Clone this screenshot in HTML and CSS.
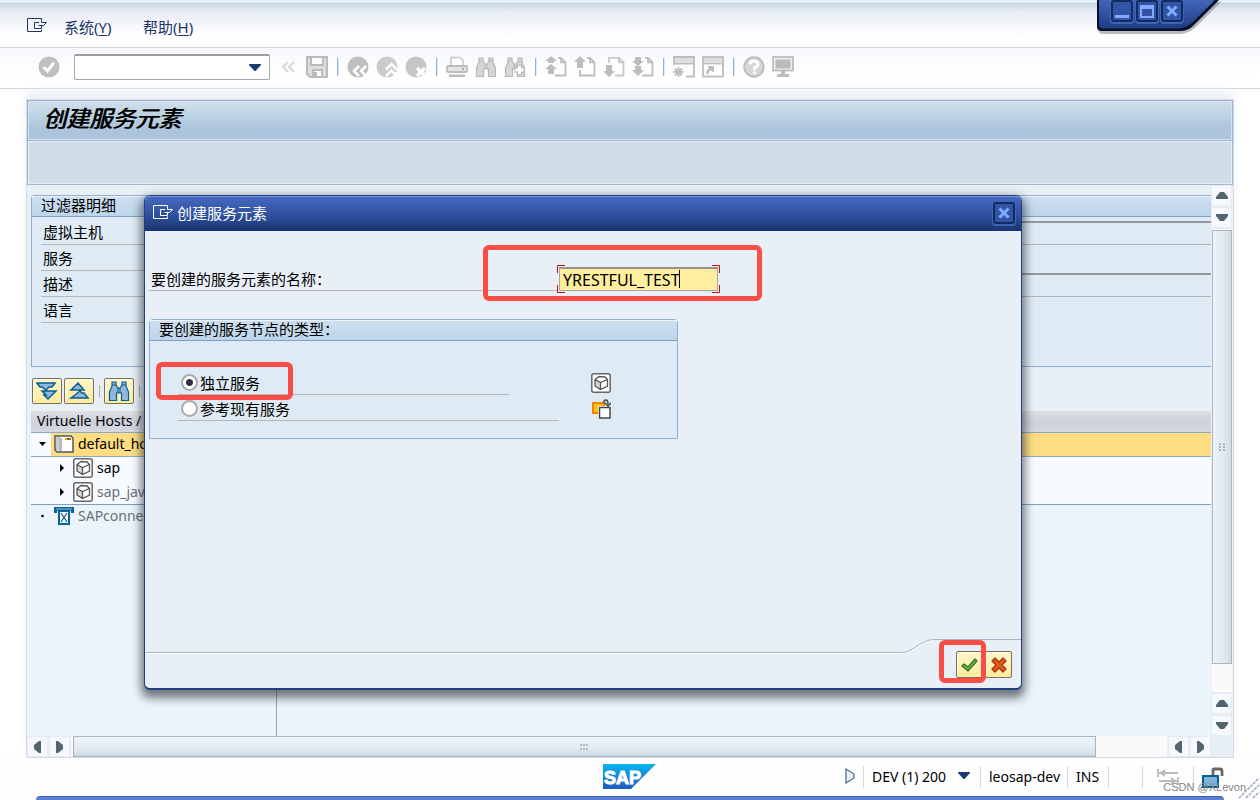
FILE: index.html
```html
<!DOCTYPE html>
<html lang="zh-CN">
<head>
<meta charset="utf-8">
<title>创建服务元素</title>
<link rel="stylesheet" href="styles.css">
</head>
<body>
<svg class="defs" aria-hidden="true">
  <defs>
    <linearGradient id="sapblue" x1="0" y1="0" x2="0" y2="1"><stop offset="0" stop-color="#0cb4ee"/><stop offset="1" stop-color="#1f5cc0"/></linearGradient>
    <linearGradient id="winblue" x1="0" y1="0" x2="0" y2="1"><stop offset="0" stop-color="#4265b8"/><stop offset="1" stop-color="#1f3c80"/></linearGradient>
    <symbol id="exit" viewBox="0 0 20 15"><path d="M14.500 3V.5H.5V13.500H14.500V11.500M14.500 2.500V4.500H19.500L16.500 7.500H11.500M12 4.500H7.500V10.500H14.500V8" fill="none" stroke="currentColor" stroke-width="1"/></symbol>
    <symbol id="cube" viewBox="0 0 20 20"><rect x=".8" y=".8" width="18.400" height="18.400" rx="2" fill="#fff" stroke="#666" stroke-width="1.500"/><path d="M4 6.500L9.500 9.500V16.500L4 13Z" fill="#d4d4d4"/><path d="M4 6.500L8 3.500L14 4L16.500 6.500V13L9.500 16.500L4 13ZM4 6.500L9.500 9.500L16.500 6.500M9.500 9.500V16.500" fill="none" stroke="#555" stroke-width="1.300"/></symbol>
    <symbol id="binoc" viewBox="0 0 22 22"><path d="M4 2H8V5L10 8H12L14 5V2H18V6L20.500 12V20.500H13.500V13H8.500V20.500H1.500V12L4 6Z" stroke-width="1.200"/><path d="M4 5H8M14 5H18M10 8V13M12 8V13" fill="none"/></symbol>
    <symbol id="page" viewBox="0 0 22 22"><path d="M13 1.800H16L20.500 6.300V19.500H10M16 1.800V6.300H20.500" fill="none" stroke="#bdbdbd" stroke-width="1.800"/></symbol>
  </defs>
</svg>
<div class="window">
  <nav class="menubar">
    <button class="plain menu-icon" aria-label="菜单"><svg width="20" height="15"><use href="#exit"/></svg></button>
    <a class="menu" href="#">系统(<u>Y</u>)</a>
    <a class="menu" href="#">帮助(<u>H</u>)</a>
  </nav>
  <div class="winctl">
    <svg class="winctl-shape" width="126" height="36" viewBox="0 0 126 36"><path d="M0 0H124L99 25Q92 31 84 32H6Q1 32 1 27V0Z" fill="#777" opacity=".5" transform="translate(0 2)"/><path d="M0 0H122L98 24Q92 31 84 31H5Q0 31 0 27Z" fill="#050f2c"/><path d="M2 0H118L97 21Q90 28 82 28.500H6Q2 28.500 2 25Z" fill="url(#winblue)"/></svg>
    <button class="wbtn" aria-label="最小化"><svg width="16" height="16"><rect x="1" y="12" width="14" height="3" fill="#82aaff"/></svg></button>
    <button class="wbtn" aria-label="最大化"><svg width="16" height="16"><path d="M1 2H15V15H1ZM3 6V13H13V6Z" fill="#82aaff" fill-rule="evenodd"/></svg></button>
    <button class="wbtn" aria-label="关闭"><svg width="16" height="16"><path d="M3.500 3.500L12.500 12.500M12.500 3.500L3.500 12.500" stroke="#82aaff" stroke-width="3"/></svg></button>
  </div>
  <div class="toolbar">
    <button class="plain" aria-label="确认"><svg width="22" height="22"><circle cx="11" cy="11" r="10.500" fill="#bfbfbf"/><path d="M5.500 11L9.500 15L16 6.500" fill="none" stroke="#fff" stroke-width="3"/></svg></button>
    <div class="combo"><input aria-label="命令"><button class="plain" aria-label="展开"><svg width="12" height="7"><path d="M0 0H12V1L6.500 7H5.500L0 1Z" fill="#1f3a70"/></svg></button></div>
    <button class="plain chev" aria-label="收起"><svg width="14" height="12"><path d="M7 1L2 6L7 11M13 1L8 6L13 11" fill="none" stroke="#d8d8d8" stroke-width="2"/></svg></button>
    <button class="plain" aria-label="保存"><svg width="22" height="22"><path d="M1 1H21V21H4L1 18Z" fill="#dedede" stroke="#bbb" stroke-width="2"/><path d="M5 1H17V9H5ZM7 14H16V21H7Z" fill="#fff" stroke="#bbb" stroke-width="2"/><rect x="8" y="16" width="3" height="5" fill="#bbb"/></svg></button>
    <i class="sep"></i>
    <div class="tools">
      <button class="plain" aria-label="返回"><svg width="22" height="22"><circle cx="11" cy="11" r="10.500" fill="#bfbfbf"/><path d="M12 10L7 15L12 20M19 10L14 15L19 20" fill="none" stroke="#fff" stroke-width="2.500"/></svg></button>
      <button class="plain" aria-label="退出"><svg width="22" height="22"><circle cx="11" cy="11" r="10.500" fill="#cbcbcb"/><path d="M10 13.500L15.500 8L21 13.500M10 20L15.500 14.500L21 20" fill="none" stroke="#fff" stroke-width="2.500"/></svg></button>
      <button class="plain" aria-label="取消"><svg width="22" height="22"><circle cx="11" cy="11" r="10.500" fill="#c6c6c6"/><path d="M12 12L20 20M20 12L12 20" stroke="#fff" stroke-width="3.200"/></svg></button>
    </div>
    <i class="sep"></i>
    <div class="tools">
      <button class="plain" aria-label="打印"><svg width="22" height="22"><path d="M5 9V1.500H14L17 4.500V9" fill="#fff" stroke="#c6c6c6" stroke-width="1.500"/><rect x="1" y="10" width="20" height="6" rx="1" fill="#e4e4e4" stroke="#bbb" stroke-width="1.800"/><rect x="3" y="18.500" width="16" height="2.500" fill="#bbb"/><rect x="16" y="12" width="2" height="2" fill="#aaa"/></svg></button>
      <button class="plain gray" aria-label="查找"><svg width="22" height="22"><use href="#binoc"/></svg></button>
      <button class="plain gray" aria-label="继续查找"><svg width="22" height="22"><use href="#binoc"/><path d="M15.500 9V19M10.500 14H20.500" stroke="#bbb" stroke-width="5.500"/><path d="M15.500 10V18M11.500 14H19.500" stroke="#fff" stroke-width="3"/></svg></button>
    </div>
    <i class="sep"></i>
    <div class="tools">
      <button class="plain" aria-label="首页"><svg width="22" height="22"><use href="#page"/><path d="M6 0L12 5H9V7H3V5H0ZM6 8L12 13H9V18H3V13H0Z" fill="#bdbdbd"/></svg></button>
      <button class="plain" aria-label="上一页"><svg width="22" height="22"><use href="#page"/><path d="M6 14V19.500H11" fill="none" stroke="#bdbdbd" stroke-width="1.800"/><path d="M6 0L12 6H9V12H3V6H0Z" fill="#bdbdbd"/></svg></button>
      <button class="plain" aria-label="下一页"><svg width="22" height="22"><path d="M6 7V1.800H16L20.500 6.300V19.500H12M16 1.800V6.300H20.500" fill="none" stroke="#c8c8c8" stroke-width="1.800"/><path d="M6 21L12 15H9V9H3V15H0Z" fill="#bdbdbd"/></svg></button>
      <button class="plain" aria-label="末页"><svg width="22" height="22"><use href="#page"/><path d="M3 1H9V5H12L6 10L0 5H3ZM3 10H9V14H12L6 20L0 14H3Z" fill="#bdbdbd"/></svg></button>
    </div>
    <i class="sep"></i>
    <div class="tools">
      <button class="plain" aria-label="新建会话"><svg width="22" height="22"><path d="M1 9V1H21V20.500H13" fill="none" stroke="#bdbdbd" stroke-width="1.800"/><path d="M2 2H20V6H2Z" fill="#dedede"/><path d="M1 7.500H21M5.500 11V21M.5 16H10.500M2 12.500L9 19.500M9 12.500L2 19.500" stroke="#bdbdbd" stroke-width="1.800"/></svg></button>
      <button class="plain" aria-label="快捷方式"><svg width="22" height="22"><rect x="1" y="1" width="20" height="19.500" fill="#fff" stroke="#bdbdbd" stroke-width="1.800"/><path d="M2 2H20V6H2Z" fill="#dedede"/><path d="M1 7.500H21" stroke="#bdbdbd" stroke-width="1.800"/><path d="M5.500 18Q5 14 9 13" fill="none" stroke="#bbb" stroke-width="2.500"/><path d="M6 10.500H11.500V16Z" fill="#bbb" stroke="#bbb"/></svg></button>
    </div>
    <i class="sep"></i>
    <div class="tools">
      <button class="plain" aria-label="帮助"><svg width="22" height="22"><circle cx="11" cy="11" r="9.800" fill="#d6d6d6" stroke="#bdbdbd" stroke-width="1.800"/><path d="M7 8.500Q7 5 11 5Q15 5 15 8.500Q15 10.500 11.500 11.500V14M11.500 15.500V18" fill="none" stroke="#fff" stroke-width="2.800"/></svg></button>
      <button class="plain" aria-label="布局"><svg width="22" height="22"><rect x="1" y="1" width="20" height="13.500" fill="#eee" stroke="#bdbdbd" stroke-width="1.800"/><rect x="3.500" y="3.500" width="15" height="9" fill="#bbb"/><path d="M9 15H13V18H17V21H5V18H9Z" fill="#bdbdbd"/></svg></button>
    </div>
  </div>

  <main class="frame">
    <h1 class="title">创建服务元素</h1>
    <div class="appbar"></div>
    <div class="work">
      <div class="content">
        <section class="filter">
          <h2 class="group-title">过滤器明细</h2>
          <div class="frows">
            <div class="frow"><label for="f1">虚拟主机</label><input id="f1" readonly></div>
            <div class="frow"><span>服务</span></div>
            <div class="frow"><label for="f3">描述</label><input id="f3" readonly></div>
            <div class="frow"><span>语言</span></div>
          </div>
        </section>
        <div class="treebar">
          <button class="ybtn" aria-label="全部展开"><svg width="22" height="20"><path d="M1 2H19L16 6H13L10 9L6 6H4ZM6 10H20L12 18L8 14H10Z" fill="#8fb6dc" stroke="#045f92" stroke-width="1.500"/></svg></button>
          <button class="ybtn" aria-label="全部折叠"><svg width="22" height="20"><path d="M3 9L10 2L16 9ZM3 17H20L16 12H14L12 10L7 14Z" fill="#8fb6dc" stroke="#045f92" stroke-width="1.500"/></svg></button>
          <i class="bar"></i>
          <button class="ybtn find" aria-label="查找"><svg width="22" height="22"><use href="#binoc"/></svg></button>
          <i class="bar"></i>
        </div>
        <table class="tree">
          <thead><tr><th class="c1">Virtuelle Hosts /</th><th></th></tr></thead>
          <tbody>
            <tr class="sel"><td class="c1"><div class="node"><svg class="tw" width="9" height="5"><path d="M1 0H8L4.500 4Z"/></svg><div class="hot"><svg width="20" height="18"><path d="M1 1H17L19 3V17H3L1 15Z" fill="#fff" stroke="#555" stroke-width="1.500"/><path d="M5 1V16M7 3V16" stroke="#777"/><rect x="2" y="2" width="3" height="13" fill="#ccc"/><rect x="11" y="3" width="2" height="2" fill="#f7b500"/><rect x="13" y="3" width="2" height="2" fill="#e22"/><rect x="15" y="3" width="2" height="2" fill="#2b2"/></svg><span>default_host</span></div></div></td><td></td></tr>
            <tr><td class="c1"><div class="node sub"><svg class="tw" width="5" height="8"><path d="M0 0L4 4L0 8Z"/></svg><svg width="20" height="20"><use href="#cube"/></svg><span>sap</span></div></td><td></td></tr>
            <tr class="last"><td class="c1"><div class="node sub dim"><svg class="tw" width="5" height="8"><path d="M0 0L4 4L0 8Z"/></svg><svg width="20" height="20"><use href="#cube"/></svg><span>sap_java</span></div></td><td></td></tr>
            <tr class="tail"><td class="c1"><div class="node dim"><svg class="tw" width="9" height="4"><circle cx="4.500" cy="2" r="1.300"/></svg><div class="hot"><svg width="20" height="20"><path d="M0 1H20V7H17V5H3V7H0Z" fill="#0a6296"/><path d="M2 3H18" stroke="#8fc0e0"/><path d="M5 5H15V18H5Z" fill="#fff" stroke="#0a6296" stroke-width="2"/><path d="M7 7L13 16M13 7L7 16" stroke="#0a6296" stroke-width="1.300"/></svg><span>SAPconnect</span></div></div></td><td></td></tr>
          </tbody>
        </table>
        <div class="treefill"></div>
      </div>
      <div class="vscroll">
        <button aria-label="上"><svg width="12" height="7"><path d="M4 0H8L12 5V7H0V5Z"/></svg></button>
        <button aria-label="下"><svg width="12" height="7"><path d="M4 7H8L12 2V0H0V2Z"/></svg></button>
        <div class="vtrack"><div class="vthumb"><i class="grip"></i></div></div>
        <button aria-label="上"><svg width="12" height="7"><path d="M4 0H8L12 5V7H0V5Z"/></svg></button>
        <button aria-label="下"><svg width="12" height="7"><path d="M4 7H8L12 2V0H0V2Z"/></svg></button>
      </div>
    </div>
    <div class="hscroll">
      <button aria-label="左"><svg width="7" height="12"><path d="M0 4V8L5 12H7V0H5Z"/></svg></button>
      <button aria-label="右"><svg width="7" height="12"><path d="M7 4V8L2 12H0V0H2Z"/></svg></button>
      <div class="htrack"><div class="hthumb"><i class="grip wide"></i></div></div>
      <button aria-label="左"><svg width="7" height="12"><path d="M0 4V8L5 12H7V0H5Z"/></svg></button>
      <button aria-label="右"><svg width="7" height="12"><path d="M7 4V8L2 12H0V0H2Z"/></svg></button>
    </div>
  </main>

  <footer class="status">
    <div class="logo-slot"><svg width="53" height="26" viewBox="0 0 53 26"><path d="M0 0H53L28 25H0Z" fill="url(#sapblue)"/><text class="logo-text" x="1" y="20">SAP</text></svg></div>
    <div class="cells">
      <button class="plain play" aria-label="展开"><svg width="10" height="16"><path d="M1 1L9 6V10L1 15Z" fill="#e8eef8" stroke="#5a6d92" stroke-width="1.300"/></svg></button>
      <div class="cell sys">DEV (1) 200<svg width="12" height="7"><path d="M0 0H12V1L6.500 7H5.500L0 1Z" fill="#1f3a70"/></svg></div>
      <div class="cell host">leosap-dev</div>
      <div class="cell ins">INS</div>
      <div class="cell gap"></div>
      <div class="cell arrows"><svg width="22" height="18"><path d="M1 1V9M2 5H21M21 9V17M2 13H20" stroke="#bbb" stroke-width="1.800"/><path d="M2 5L8 1V9ZM20 13L14 9V17Z" fill="#bbb"/></svg></div>
      <div class="cell lock"><svg width="22" height="21"><path d="M11 9V3Q11 2 12 2H18Q20 2 20 4V9" fill="none" stroke="#666" stroke-width="2.800"/><rect x="1" y="9" width="15" height="11" fill="#80b2da" stroke="#045f92" stroke-width="2"/></svg></div>
    </div>
    <svg class="resize" width="22" height="22"><path d="M1 21L21 1M8 21L21 8M15 21L21 15" stroke="#9aa8c4" stroke-width="1.500" stroke-dasharray="3 1"/></svg>
    <span class="watermark">CSDN @XLevon</span>
  </footer>
  <div class="band"></div>

  <form class="dialog" role="dialog" aria-labelledby="dt" onsubmit="return false">
    <header class="dhead"><svg width="20" height="15"><use href="#exit"/></svg><h2 id="dt">创建服务元素</h2>
      <button class="wbtn" type="button" aria-label="关闭"><svg width="16" height="16"><path d="M3.500 3.500L12.500 12.500M12.500 3.500L3.500 12.500" stroke="#82aaff" stroke-width="3"/></svg></button></header>
    <div class="dbody">
      <div class="field"><label for="nm">要创建的服务元素的名称：</label>
        <div class="focus"><input id="nm" value="YRESTFUL_TEST"><i class="caret"></i><svg class="corners" width="163" height="28"><path d="M.5 8V.5H8M155 .5H162.500V8M.5 20V27.500H8M155 27.500H162.500V20" fill="none" stroke="#d00a0a"/></svg></div>
        <i class="mark m1"></i></div>
      <fieldset class="group">
        <legend class="group-title">要创建的服务节点的类型：</legend>
        <div class="rows">
          <div class="rrow"><label class="opt short"><input type="radio" name="t" checked>独立服务</label><svg width="20" height="20"><use href="#cube"/></svg><i class="mark m2"></i></div>
          <div class="rrow"><label class="opt"><input type="radio" name="t">参考现有服务</label><svg width="20" height="20"><rect x="2" y="4" width="11" height="10" fill="#ffc20e" stroke="#f08200" stroke-width="2"/><rect x="7" y="7" width="13" height="13" fill="#fff"/><path d="M8.500 8.500H19V19H8.500ZM13 4V2Q13 1 15 1Q17 1 17 5M14 4L17 7L20 4" fill="none" stroke="#444" stroke-width="1.500"/></svg></div>
        </div>
      </fieldset>
    </div>
    <div class="dfoot">
      <div class="fline"></div>
      <svg width="30" height="14"><path d="M0 14.500Q6 14.500 12 10Q24 1.500 30 1.500" fill="none" stroke="#fff"/><path d="M0 13.500Q5 13.500 11 9Q23 .5 30 .5" fill="none" stroke="#a8b6cc"/></svg>
      <div class="fright">
        <button class="ybtn" aria-label="继续"><svg width="20" height="18"><path d="M2 10L4 8L8 11L15 3L17 5L8 15Z" fill="#7dbb1f" stroke="#36753a" stroke-width="1.300" stroke-linejoin="round"/></svg></button>
        <button class="ybtn" type="button" aria-label="取消"><svg width="16" height="16"><path d="M4 1L8 5L12 1L15 4L11 8L15 12L12 15L8 11L4 15L1 12L5 8L1 4Z" fill="#e05a14" stroke="#a83214" stroke-width="1.300" stroke-linejoin="round"/></svg></button>
        <i class="mark m3"></i>
      </div>
    </div>
  </form>
</div>
</body>
</html>
```
FILE: styles.css
```css
* { box-sizing: border-box; }
body { margin: 0; font: 14px/20px "Noto Sans", "Noto Sans CJK SC", sans-serif; color: #000; background: #fff; }
.defs { position: absolute; width: 0; height: 0; }
h1, h2 { margin: 0; font-weight: 400; }
i { font-style: normal; }
svg { display: block; flex: none; }
button { font: inherit; }
.plain { border: 0; padding: 0; background: none; color: inherit; flex: none; }
.window { position: relative; display: flex; flex-direction: column; min-height: 100vh; overflow: hidden; }

.menubar { display: flex; align-items: center; height: 48px; padding: 7px 27px 0; color: #1d3464; border-bottom: 1px solid #d3d7e4; background: linear-gradient(#eaf1f9 0 2px, #c5d5e6 3px, #e8edf5 12px, #fff 36px); }
.menu-icon { margin-right: 17px; padding-bottom: 3px; }
.menu { width: 79px; font-size: 15px; color: inherit; text-decoration: none; }
.menu u { text-underline-offset: 2px; }
.winctl { position: absolute; top: 0; right: 37px; width: 126px; height: 36px; display: flex; gap: 3px; padding-left: 14px; }
.winctl-shape { position: absolute; left: 0; top: 0; }
.wbtn { position: relative; width: 22px; height: 22px; padding: 0; display: grid; place-items: center; border: 2px solid #142a62; border-radius: 3px; background: #3154a4; box-shadow: 0 1px 0 1px #4064b0; }

.toolbar { display: flex; align-items: center; height: 41px; padding: 0 38px 2px; border-bottom: 1px solid #cdd3df; background: linear-gradient(#f6f8fb, #fff 70%); }
.combo { display: flex; align-items: center; width: 196px; height: 26px; margin-left: 14px; padding-right: 8px; background: #fff; border: 1px solid #a4a8a8; border-top: 2px solid #9a9c9e; border-radius: 2px; }
.combo input { flex: 1; min-width: 0; border: 0; background: none; outline: 0; }
.chev { margin: 0 11px; }
.sep { width: 1px; height: 18px; margin: 0 9px; background: #8fb4dc; box-shadow: 1px 0 #dce8f4; }
.tools { display: flex; gap: 7px; }
.gray { fill: #d6d6d6; stroke: #b8b8b8; }

.frame { flex: 1; display: flex; flex-direction: column; margin: 10px 26px 0; border: 1px solid #d4daea; box-shadow: 0 -8px 8px #edf1f7; background: #e8eff7; }
.title { height: 41px; padding-left: 15px; border: 1px solid #9eb2cb; background: linear-gradient(#cfdfeb, #b9d0e0 45%, #adc4dd 70%, #abc3dc); box-shadow: inset 0 0 0 1px #d3e3f0; font-size: 23px; line-height: 35px; font-style: italic; text-shadow: 1px 0 #000; }
.appbar { height: 44px; border: 1px solid #a8b8cc; border-top: 0; background: #cfdde8; box-shadow: inset 0 0 0 1px #e3edf4; }
.work { flex: 1; display: flex; }
.content { flex: 1; min-width: 0; display: flex; flex-direction: column; padding: 10px 0 0 4px; background: linear-gradient(#e8eff7 0 240px, #ebf3fb 240px); }
.filter { height: 172px; border: 1px solid #8cafd2; border-right: 0; border-radius: 4px 0 0 0; background: #deebf4; }
.group-title { height: 21px; padding-left: 9px; font-size: 15px; line-height: 18px; border-bottom: 1px solid #7f9fc4; background: linear-gradient(#cfdff0, #bdd5ea); box-shadow: inset 0 1px #ecf4fa; }
.frows { padding: 2px 0 0 9px; }
.frow { display: flex; height: 26px; align-items: center; }
.frow label, .frow span { width: 300px; height: 26px; padding: 3px 0 0 2px; font-size: 15px; line-height: 20px; border-bottom: 1px solid #b6b6b6; }
.frow input { flex: 1; min-width: 0; height: 24px; border: 0; border-top: 2px solid #94989c; border-bottom: 1px solid #b0b2b4; background: #deebf4; align-self: flex-end; }
.treebar { display: flex; align-items: center; gap: 2px; height: 44px; padding: 3px 0 0 1px; }
.ybtn { display: grid; place-items: center; width: 30px; height: 26px; padding: 0; border: 1px solid #77705a; border-radius: 2px; background: linear-gradient(#fff6cc, #ffeb9c); box-shadow: inset 1px 1px #fffbe6; }
.find { fill: #8fb6dc; stroke: #045f92; }
.bar { width: 1px; height: 12px; margin: 0 2px 0 3px; background: #aaa; }

.tree { width: 100%; table-layout: fixed; border-collapse: collapse; }
.tree .c1 { width: 246px; }
.tree th { height: 21px; padding: 0 0 0 6px; text-align: left; font-weight: 400; border-bottom: 1px solid #8fa9c4; }
.tree thead tr { background: linear-gradient(#dde0e0, #cdd1db 50%, #d5d8e2); }
.tree td { height: 24px; padding: 0; background: #f7fbff; }
.tree .sel td { border-bottom: 1px solid #8fa9c4; }
.tree .sel td + td, .sel .hot { background: #fcdd82; }
.tree .last td { border-bottom: 1px solid #7ba0c6; }
.tree .tail td { background: #ebf3fb; }
.node { display: flex; align-items: center; gap: 4px; height: 23px; padding-left: 7px; white-space: nowrap; overflow: hidden; }
.hot { flex: 1; display: flex; gap: 4px; height: 23px; align-items: center; padding-left: 3px; }
.node.sub { padding-left: 29px; }
.node.sub .tw { margin-right: 4px; }
.node.dim span { color: #6a7078; }
.treefill { flex: 1; width: 246px; border-right: 1px solid #94a6ba; }

.vscroll { width: 22px; display: flex; flex-direction: column; padding: 0 1px 0 0; background: #ebeff5; gap: 1px; }
.vscroll button, .hscroll button { flex: none; width: 21px; height: 21px; padding: 0; display: grid; place-items: center; border: 1px solid #e8ecf2; background: #f5f8fc; fill: #52646f; }
.vtrack { flex: 1; margin-left: 1px; padding-top: 1px; background: #fafafa; }
.vthumb { height: 94%; display: grid; place-items: center; border: 1px solid #a9b7c2; background: linear-gradient(90deg, #edf3f7, #e0e9f1 60%, #d0dce7); }
.hscroll { display: flex; gap: 1px; height: 21px; padding-right: 22px; background: #e8eef6; }
.htrack { flex: 1; padding-left: 2px; background: #fafafa; }
.hthumb { width: 93.5%; height: 21px; display: grid; place-items: center; border: 1px solid #a3b4c2; background: linear-gradient(#edf3f7, #e3ebf2 60%, #ccd9e5); }
.grip { width: 6px; height: 8px; background: repeating-linear-gradient(90deg, #a9b7c2 0 2px, transparent 2px 4px); mask: repeating-linear-gradient(#000 0 2px, transparent 2px 3px); }
.grip.wide { width: 9px; height: 6px; background: repeating-linear-gradient(90deg, #a9b7c2 0 2px, transparent 2px 3px); mask: repeating-linear-gradient(#000 0 2px, transparent 2px 4px); }

.status { position: relative; display: flex; height: 38px; align-items: center; background: #fefefe; }
.logo-slot { flex: 1; display: flex; justify-content: center; padding-left: 414px; padding-bottom: 1px; }
.logo-text { font: 700 18px "Liberation Sans", sans-serif; fill: #fff; stroke: #fff; }
.cells { display: flex; align-items: center; padding-right: 35px; }
.play { margin-right: 8px; padding-bottom: 2px; }
.cell { display: flex; align-items: center; height: 22px; padding-left: 8px; border-left: 1px solid #d2d6de; white-space: nowrap; }
.sys { width: 117px; gap: 12px; }
.sys svg { margin-bottom: 3px; }
.host { width: 87px; }
.ins { width: 41px; }
.gap { width: 34px; }
.arrows { width: 51px; padding-left: 14px; }
.lock { width: 32px; }
.resize { position: absolute; right: 0; bottom: -3px; }
.watermark { position: absolute; right: 14px; bottom: 1px; font: 11px/16px "Liberation Sans", sans-serif; color: #858585; }
.band { height: 4px; margin: 0 36px; border-radius: 12px 12px 0 0; border-top: 1px solid #3e60ae; background: #5b80d6; }

.dialog { position: absolute; left: 144px; right: 238px; top: 195px; height: 495px; display: flex; flex-direction: column; border: 1px solid #23407e; border-bottom-width: 2px; border-radius: 6px; background: #e8eff7; box-shadow: 0 5px 10px 3px rgba(30, 35, 45, .6); }
.dhead { display: flex; align-items: center; gap: 4px; height: 35px; padding: 0 6px 3px 8px; color: #fff; border-top: 1px solid #7797dc; border-radius: 5px 5px 0 0; background: linear-gradient(#4569c0, #2c4d99 60%, #19336f); }
.dhead h2 { flex: 1; font-size: 15px; }
.dbody { flex: 1; padding: 34px 4px 0; }
.field { position: relative; display: flex; height: 28px; margin-bottom: 26px; }
.field label { width: 410px; height: 26px; padding: 4px 2px 0; font-size: 15px; line-height: 20px; border-bottom: 1px solid #b6b6b6; }
.focus { position: relative; width: 163px; margin-left: -2px; padding: 2px; background: #e8eff7; }
.focus input { display: block; width: 159px; height: 24px; padding: 0 3px; border: 1px solid #a8a8a0; border-top: 2px solid #94948c; background: #ffee9e; font: inherit; font-size: 16px; line-height: 20px; outline: 0; }
.corners { position: absolute; left: 0; top: 0; }
.caret { position: absolute; left: 122px; top: 5px; width: 1px; height: 18px; background: #000; }
.mark { position: absolute; border: 5px solid #f94d48; border-radius: 6px; pointer-events: none; }
.m1 { left: 334px; top: -20px; width: 279px; height: 56px; }
.m2 { left: -22px; top: -7px; width: 137px; height: 38px; }
.m3 { right: 35px; top: 0; width: 47px; height: 43px; }
.group { width: 529px; height: 120px; margin: 0; padding: 0; border: 1px solid #8cafd2; border-radius: 4px 4px 0 0; background: #deebf4; min-width: 0; }
.group legend { float: left; width: 100%; }
.rows { clear: both; padding: 28px 0 0 28px; }
.rrow { position: relative; display: flex; align-items: center; height: 26px; }
.opt { display: flex; align-items: center; width: 381px; height: 26px; padding: 2px 0 0 3px; gap: 2px; font-size: 15px; line-height: 20px; border-bottom: 1px solid #b6b6b6; }
.opt.short { width: 331px; margin-right: 50px; }
.rrow > svg { margin: 2px 0 0 32px; }
.opt input { appearance: none; width: 17px; height: 17px; margin: 0; border: 2px solid #aaa; border-radius: 50%; background: #fff; }
.opt input:checked { background: radial-gradient(circle, #2a3144 0 3px, #fff 4px); }
.dfoot { display: flex; height: 49px; }
.fline { flex: 1; height: 14px; border-bottom: 1px solid #a8b6cc; box-shadow: 0 1px #fff; }
.fright { position: relative; display: flex; gap: 2px; width: 88px; padding: 11px 9px 0 0; justify-content: flex-end; border-top: 1px solid #a8b6cc; }
.fright .ybtn { width: 27px; height: 27px; }
```
